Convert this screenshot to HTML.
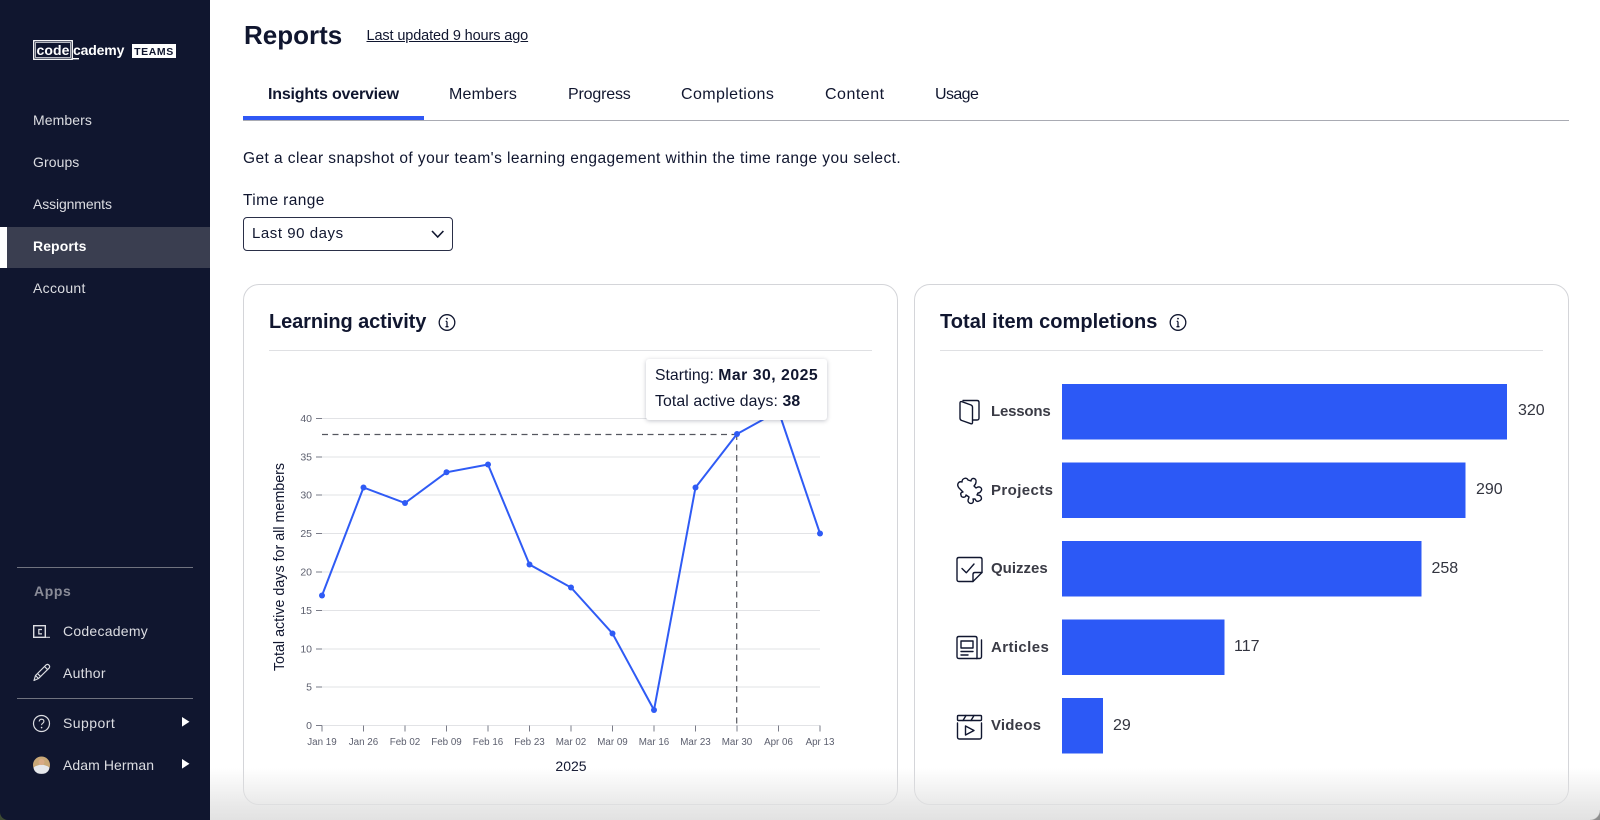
<!DOCTYPE html>
<html lang="en">
<head>
<meta charset="utf-8">
<title>Reports</title>
<style>
html,body{margin:0;padding:0;width:1600px;height:820px;overflow:hidden;background:#fff}
body{position:relative;font-family:"Liberation Sans",sans-serif;color:#10162f}
.t{position:absolute;white-space:nowrap;line-height:20px;height:20px}
#side{position:absolute;left:0;top:0;width:209.5px;height:820px;background:#10162f;border-bottom-left-radius:8px}
#side .t{color:#dcdde2;font-size:14px;letter-spacing:.08px}
.act{position:absolute;left:6.5px;top:226.5px;width:203px;height:41.5px;background:#3a3e50}
.bar{position:absolute;left:0;top:226.5px;width:6.5px;height:41.5px;background:#fff}
.hr{position:absolute;left:17px;width:176px;height:1px;background:#70737f}
.tab{position:absolute;top:85px;font-size:16px;line-height:20px;white-space:nowrap}
.card{position:absolute;top:284px;width:653px;height:519px;border:1px solid #d4d5d9;border-radius:16px;box-sizing:content-box}
.sel{position:absolute;left:243px;top:217px;width:208px;height:32px;border:1px solid #2a2f48;border-radius:4px}
.h2{font-size:20px;font-weight:700}
.lab{font-size:15px;font-weight:700;color:#3a3b45}
.val{font-size:16px;color:#32343f}
#fade{position:absolute;left:209.5px;top:768px;width:1390.5px;height:52px;background:linear-gradient(to bottom,rgba(226,226,226,0),rgba(226,226,226,.72) 68%,rgba(226,226,226,1));pointer-events:none}
svg{position:absolute;left:0;top:0}
svg text{font-family:"Liberation Sans",sans-serif}
</style>
</head>
<body>

<div style="position:absolute;left:0;top:810px;width:10px;height:10px;background:#3d4a33"></div>
<div id="side">
  <div class="act"></div><div class="bar"></div>
  <div class="t" style="left:33px;top:110px">Members</div>
  <div class="t" style="left:33px;top:152px">Groups</div>
  <div class="t" style="left:33px;top:194px;letter-spacing:-.12px">Assignments</div>
  <div class="t" style="left:33px;top:236px;font-weight:700;color:#fff">Reports</div>
  <div class="t" style="left:33px;top:278px;letter-spacing:.3px">Account</div>
  <div class="hr" style="top:567px"></div>
  <div class="t" style="left:34px;top:581px;font-weight:700;color:#8a8c98;font-size:14px;letter-spacing:.6px">Apps</div>
  <div class="t" style="left:63px;top:620.500px;letter-spacing:.25px">Codecademy</div>
  <div class="t" style="left:63px;top:662.500px;letter-spacing:.25px">Author</div>
  <div class="hr" style="top:698px"></div>
  <div class="t" style="left:63px;top:712.500px;letter-spacing:.45px">Support</div>
  <div class="t" style="left:63px;top:754.500px">Adam Herman</div>
  <div class="t" style="left:36.500px;top:40px;color:#fff;font-size:14px;font-weight:700">code</div>
  <div class="t" style="left:73px;top:40px;color:#fff;font-size:14px;font-weight:700;letter-spacing:-.15px">cademy</div>
</div>

<div class="t" style="left:244px;top:25px;font-size:26px;font-weight:700;line-height:20px">Reports</div>
<div class="t" style="left:366.500px;top:26px;font-size:14.500px;text-decoration:underline;letter-spacing:-.12px">Last updated 9 hours ago</div>

<div class="tab" style="left:268px;font-weight:700;letter-spacing:-.2px">Insights overview</div>
<div class="tab" style="left:449px;letter-spacing:.2px">Members</div>
<div class="tab" style="left:568px;letter-spacing:-.18px">Progress</div>
<div class="tab" style="left:681px;letter-spacing:.39px">Completions</div>
<div class="tab" style="left:825px;letter-spacing:.5px">Content</div>
<div class="tab" style="left:935px;letter-spacing:-.6px">Usage</div>
<div style="position:absolute;left:243px;top:120px;width:1326px;height:1px;background:#a9abb3"></div>
<div style="position:absolute;left:243px;top:116px;width:181px;height:4px;background:#3058f5"></div>

<div class="t" style="left:243px;top:149px;font-size:15.500px;letter-spacing:.43px">Get a clear snapshot of your team's learning engagement within the time range you select.</div>
<div class="t" style="left:243px;top:191px;font-size:15.500px;letter-spacing:.4px">Time range</div>
<div class="sel"></div>
<div class="t" style="left:252px;top:224px;font-size:15px;letter-spacing:.55px">Last 90 days</div>

<div class="card" style="left:243px"></div>
<div class="card" style="left:914px"></div>

<div class="t h2" style="left:269px;top:312px;letter-spacing:-.1px">Learning activity</div>
<div class="t h2" style="left:940px;top:312px;letter-spacing:.05px">Total item completions</div>

<div class="t lab" style="left:991px;top:402px;letter-spacing:-.2px">Lessons</div>
<div class="t lab" style="left:991px;top:481px;letter-spacing:.4px">Projects</div>
<div class="t lab" style="left:991px;top:559px;letter-spacing:0">Quizzes</div>
<div class="t lab" style="left:991px;top:638px;letter-spacing:.4px">Articles</div>
<div class="t lab" style="left:991px;top:716px;letter-spacing:.2px">Videos</div>
<div class="t val" style="left:1518px;top:401px">320</div>
<div class="t val" style="left:1476px;top:480px">290</div>
<div class="t val" style="left:1431.500px;top:558.500px">258</div>
<div class="t val" style="left:1234px;top:637px">117</div>
<div class="t val" style="left:1113px;top:715.500px">29</div>

<svg width="1600" height="820" viewBox="0 0 1600 820" fill="none">
  <!-- logo -->
  <rect x="33.700" y="40.700" width="38.600" height="18.600" stroke="#fff" stroke-width="1.300"/>
  <rect x="35.500" y="42.500" width="35" height="15" stroke="#fff" stroke-width=".7"/>
  <rect x="73" y="58" width="6" height="1.400" fill="#fff"/>
  <rect x="132" y="44" width="44" height="14" fill="#fff"/>
  <text x="154" y="55" text-anchor="middle" font-size="10.500" font-weight="700" fill="#10162f" letter-spacing=".6">TEAMS</text>

  <!-- sidebar icons -->
  <rect x="33.700" y="625.700" width="11.600" height="11.600" stroke="#dcdde2" stroke-width="1.400"/>
  <path d="M42 629.500h-3.200v4.400H42" stroke="#dcdde2" stroke-width="1.200"/>
  <path d="M46 637.300h4" stroke="#dcdde2" stroke-width="1"/>
  <path d="M34 680.500l1.500-5 10.500-10.500q1.500-1.300 3 .2q1.300 1.500 0 3L38.500 678.500zM35.500 675.500l3 3M37.500 673.500l3.500 3.500M44.500 666.500l3.500 3.500" stroke="#dcdde2" stroke-width="1.200" stroke-linejoin="round"/>
  <circle cx="41.500" cy="723.500" r="8" stroke="#dcdde2" stroke-width="1.200"/>
  <path d="M39.200 721.500q.2-2.300 2.400-2.300q2.300.1 2.300 2.100q0 1.300-1.300 2q-1 .6-1 1.800" stroke="#dcdde2" stroke-width="1.100"/>
  <circle cx="41.600" cy="727.600" r=".8" fill="#dcdde2"/>
  <path d="M182 717l7.500 4.800-7.500 4.800zM182 759l7.500 4.800-7.500 4.800z" fill="#fff"/>
  <circle cx="41.500" cy="765" r="8.500" fill="#c9a877"/>
  <path d="M33.500 767.500q8-5.500 16 0q-.5 4-4 5.700q-4 1.300-8 0q-3.500-1.700-4-5.700z" fill="#e6e8ec"/>
  <circle cx="41.500" cy="762" r="3" fill="#d9ab86"/>

  <!-- select chevron -->
  <path d="M432 231l5.700 6 5.700-6" stroke="#10162f" stroke-width="1.600"/>

  <!-- info icons -->
  <g stroke="#10162f" stroke-width="1.300">
    <circle cx="447" cy="322.500" r="7.800"/>
    <path d="M447 321.500v5M445.500 326.700h3M445.700 321.400h1.300"/>
    <circle cx="1178" cy="322.500" r="7.800"/>
    <path d="M1178 321.500v5M1176.500 326.700h3M1176.700 321.400h1.300"/>
  </g>
  <circle cx="447" cy="318.600" r=".9" fill="#10162f"/>
  <circle cx="1178" cy="318.600" r=".9" fill="#10162f"/>

  <!-- card dividers -->
  <path d="M269 350.500h603M940 350.500h603" stroke="#dfe0e3"/>

  <!-- gridlines -->
  <g stroke="#e2e3e6" stroke-width="1">
    <path d="M322 418.500h498M322 457h498M322 495h498M322 533.500h498M322 572h498M322 610.500h498M322 649h498M322 687h498M322 725.500h498"/>
  </g>
  <g stroke="#7a7c88" stroke-width="1">
    <path d="M316 418.500h6M316 457h6M316 495h6M316 533.500h6M316 572h6M316 610.500h6M316 649h6M316 687h6M316 725.500h6"/>
    <path d="M322 725.500v6M363.500 725.500v6M405 725.500v6M446.500 725.500v6M488 725.500v6M529.500 725.500v6M571 725.500v6M612.500 725.500v6M654 725.500v6M695.500 725.500v6M737 725.500v6M778.500 725.500v6M820 725.500v6"/>
  </g>
  <g font-size="10.500" fill="#5c5f6e" text-anchor="end">
    <text x="312" y="422">40</text><text x="312" y="460.500">35</text><text x="312" y="498.500">30</text>
    <text x="312" y="537">25</text><text x="312" y="575.500">20</text><text x="312" y="614">15</text>
    <text x="312" y="652.500">10</text><text x="312" y="690.500">5</text><text x="312" y="729">0</text>
  </g>
  <g font-size="9.800" fill="#5c5f6e" text-anchor="middle">
    <text x="322" y="745">Jan 19</text><text x="363.500" y="745">Jan 26</text><text x="405" y="745">Feb 02</text>
    <text x="446.500" y="745">Feb 09</text><text x="488" y="745">Feb 16</text><text x="529.500" y="745">Feb 23</text>
    <text x="571" y="745">Mar 02</text><text x="612.500" y="745">Mar 09</text><text x="654" y="745">Mar 16</text>
    <text x="695.500" y="745">Mar 23</text><text x="737" y="745">Mar 30</text><text x="778.500" y="745">Apr 06</text>
    <text x="820" y="745">Apr 13</text>
  </g>
  <text x="571" y="771" font-size="14" fill="#10162f" text-anchor="middle">2025</text>
  <text transform="translate(284 567) rotate(-90)" font-size="14.300" fill="#10162f" text-anchor="middle">Total active days for all members</text>

  <!-- crosshair -->
  <path d="M322 434.500H736" stroke="#55575f" stroke-width="1.200" stroke-dasharray="6 4.500"/>
  <path d="M736.700 434V725" stroke="#55575f" stroke-width="1.200" stroke-dasharray="6 4.500"/>

  <!-- line -->
  <polyline points="322,595.500 363.500,487.500 405,503 446.500,472.300 488,464.500 529.500,564.500 571,587.500 612.500,633.500 654,710 695.500,487.500 737,434 778.500,411 820,533.500" stroke="#2f5bf5" stroke-width="2"/>
  <g fill="#2f5bf5">
    <circle cx="322" cy="595.500" r="3"/><circle cx="363.500" cy="487.500" r="3"/><circle cx="405" cy="503" r="3"/>
    <circle cx="446.500" cy="472.300" r="3"/><circle cx="488" cy="464.500" r="3"/><circle cx="529.500" cy="564.500" r="3"/>
    <circle cx="571" cy="587.500" r="3"/><circle cx="612.500" cy="633.500" r="3"/><circle cx="654" cy="710" r="3"/>
    <circle cx="695.500" cy="487.500" r="3"/><circle cx="737" cy="434" r="3"/><circle cx="820" cy="533.500" r="3"/>
  </g>

  <!-- bars -->
  <g fill="#2c59f6">
    <rect x="1062" y="384" width="445" height="55.500"/>
    <rect x="1062" y="462.500" width="403.500" height="55.500"/>
    <rect x="1062" y="541" width="359.500" height="55.500"/>
    <rect x="1062" y="619.500" width="162.500" height="55.500"/>
    <rect x="1062" y="698" width="41" height="55.500"/>
  </g>

  <!-- item icons -->
  <g stroke="#10162f" stroke-width="1.400" stroke-linejoin="round" stroke-linecap="round">
    <path d="M960 403q0-2 2-1.300l9 3.300q1.500.6 1.500 2.200v15.300q0 1.800-1.700 1.200l-9-3.200q-1.800-.7-1.800-2.300z"/>
    <path d="M963 400.500h14q2 0 2 2v15.500q0 2-2 2h-4"/>
    <path d="M959 488C956 484 959 481 962 482C962 478 967 477 968 480L971 481C971 477 977 478 976 482C976 484 975 485 974 486L976 488C980 485 983 489 981 491C980 493 979 493 978 493L977 495C982 495 983 500 979 501C977 502 976 501 975 499L973 499C975 504 969 505 968 501C968 499 969 498 969 497L966 495C966 498 961 498 961 495C960 493 962 492 963 492L961 490Z"/>
    <path d="M959 557.500h21q2 0 2 2v13l-9 9h-14q-2 0-2-2v-20q0-2 2-2z"/>
    <path d="M982 572.500h-7q-2 0-2 2v7"/>
    <path d="M962 568.500l4.300 4.300 7.700-8.800"/>
    <path d="M959 636.500h16q2 0 2 2v20h-18q-2 0-2-2v-18q0-2 2-2z"/>
    <path d="M981.500 640v16.500q0 2-2 2h-3"/>
    <rect x="961" y="641" width="12" height="7"/>
    <path d="M961 651.500h12M961 655h7"/>
    <rect x="957.500" y="715.500" width="24" height="5" rx="1"/>
    <path d="M963 720.500l3-5M971 720.500l3-5"/>
    <path d="M957.500 723v14q0 2 2 2h20q2 0 2-2v-14"/>
    <path d="M965.500 726l8.500 4.500-8.500 4.500z"/>
  </g>
</svg>

<!-- tooltip -->
<div style="position:absolute;left:646px;top:359px;width:181px;height:61px;background:#fff;border-radius:3px;box-shadow:0 1px 4px rgba(16,22,47,.25)"></div>
<div class="t" style="left:655px;top:366px;font-size:15.800px">Starting: <b style="letter-spacing:.5px">Mar 30, 2025</b></div>
<div class="t" style="left:655px;top:392px;font-size:15.800px;letter-spacing:.1px">Total active days: <b>38</b></div>

<div id="fade"></div>
<div style="position:absolute;left:1590px;top:810px;width:10px;height:10px;background:radial-gradient(circle at 0 0,transparent 9.500px,#8d8d8d 10.500px)"></div>
</body>
</html>
